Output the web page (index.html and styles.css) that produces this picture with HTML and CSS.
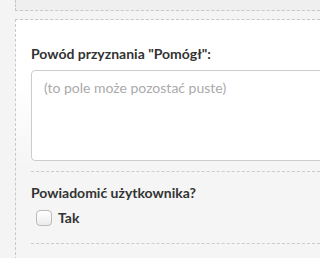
FILE: index.html
```html
<!DOCTYPE html>
<html lang="pl">
<head>
<meta charset="utf-8">
<link rel="stylesheet" href="styles.css">
</head>
<body>
<div class="top-box"></div>
<div class="panel">
  <div class="field">
    <label class="label" for="reason">Powód przyznania "Pomógł":</label>
    <textarea id="reason" class="area" placeholder="(to pole może pozostać puste)"></textarea>
  </div>
  <div class="field field-notify">
    <div class="label">Powiadomić użytkownika?</div>
    <label class="check">
      <span class="box"></span>
      <span class="check-text">Tak</span>
    </label>
  </div>
  <div class="field field-end"></div>
</div>
</body>
</html>
```
FILE: styles.css
```css
html, body {
  margin: 0;
  padding: 0;
  background: #f4f4f4;
}
body {
  height: 258px;
  overflow: hidden;
  font-family: Lato, "Liberation Sans", sans-serif;
  color: #333;
}
.top-box {
  margin-left: 15px;
  height: 10px;
  border-left: 1px dashed #c8c8c8;
  border-bottom: 1px dashed #c8c8c8;
  background: #efefef;
}
.panel {
  margin-left: 15px;
  margin-top: 8px;
  padding-left: 15px;
  border-left: 1px dashed #c8c8c8;
  border-top: 1px dashed #c8c8c8;
  background: linear-gradient(#ffffff 0, #ffffff 60px, #f5f5f5 150px);
  min-height: 240px;
}
.field {
  padding-top: 24px;
  padding-bottom: 10px;
}
.label {
  display: block;
  font-size: 14px;
  font-weight: 700;
  line-height: 20px;
  color: #333;
  white-space: nowrap;
}
.area {
  display: block;
  box-sizing: border-box;
  margin: 6px 0 0 0;
  width: 300px;
  height: 91px;
  border: 1px solid #cccccc;
  border-radius: 4px;
  background: #fff;
  padding: 7px 12px;
  font-family: Lato, "Liberation Sans", sans-serif;
  font-size: 14px;
  line-height: 20px;
  resize: none;
  outline: none;
}
.area::placeholder {
  color: #aaaaaa;
}
.field-notify {
  border-top: 1px dashed #cccccc;
  padding-top: 11px;
  padding-bottom: 16px;
}
.check {
  display: flex;
  align-items: center;
  gap: 6px;
  margin-top: 6px;
  margin-left: 5px;
}
.box {
  box-sizing: border-box;
  width: 16px;
  height: 16px;
  border: 1px solid #bbbbbb;
  border-radius: 4px;
  background: linear-gradient(#ffffff, #ececec);
}
.check-text {
  font-size: 14px;
  font-weight: 700;
  line-height: 18px;
}
.field-end {
  border-top: 1px dashed #cccccc;
  padding: 0;
}
```
